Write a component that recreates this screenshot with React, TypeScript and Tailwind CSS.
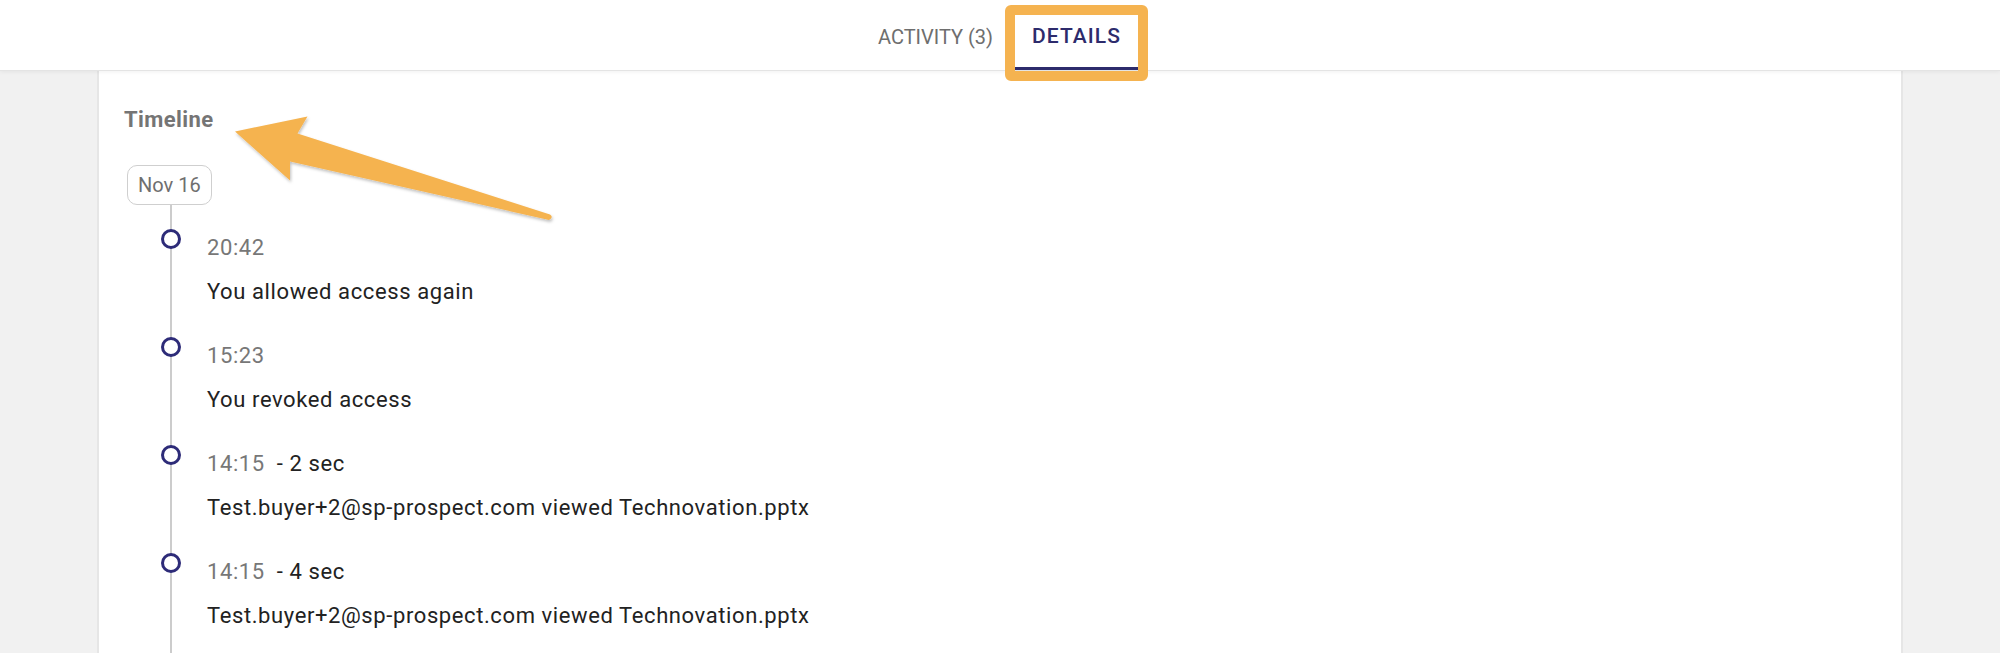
const events = [
  { time: "20:42", duration: "", text: "You allowed access again" },
  { time: "15:23", duration: "", text: "You revoked access" },
  { time: "14:15", duration: "- 2 sec", text: "Test.buyer+2@sp-prospect.com viewed Technovation.pptx" },
  { time: "14:15", duration: "- 4 sec", text: "Test.buyer+2@sp-prospect.com viewed Technovation.pptx" },
];

function Tabs() {
  return (
    <div className="relative z-10 flex h-[71px] shrink-0 justify-center border-b border-[#e4e4e4] bg-white shadow-[0_1px_4px_rgba(0,0,0,0.06)]">
      <div className="mr-[6px] flex h-full">
        <div className="flex h-full w-[159px] items-center justify-center pt-[4px] text-[20px] font-normal uppercase text-[#6e6e6e]">
          Activity (3)
        </div>
        <div className="relative flex h-full w-[123px] items-center justify-center pt-[4px] text-[21px] font-medium uppercase tracking-[0.05em] text-[#2d2b6c]">
          Details
          <div className="absolute bottom-0 left-0 right-0 h-[3px] bg-[#2d2b6c]" />
          {/* annotation box */}
          <div className="pointer-events-none absolute -left-[10px] -right-[10px] top-[5px] -bottom-[11px] rounded-[6px] border-[10px] border-[#f5b350]" />
        </div>
      </div>
    </div>
  );
}

function Arrow() {
  return (
    <svg
      className="pointer-events-none absolute left-0 top-0 z-20"
      width="600"
      height="260"
      viewBox="0 0 600 260"
    >
      <defs>
        <filter id="sh" x="-10%" y="-10%" width="120%" height="130%">
          <feDropShadow dx="1" dy="2" stdDeviation="1.5" floodColor="#000" floodOpacity="0.25" />
        </filter>
      </defs>
      <path
        d="M235 131.5 L307.5 116.5 L297.5 133.5 L550 214.5 Q554 217.5 549 220 L290 161.5 L290 180.5 Z"
        fill="#f5b350"
        filter="url(#sh)"
      />
    </svg>
  );
}

export default function App() {
  return (
    <div
      className="relative flex h-[653px] flex-col overflow-hidden bg-[#f1f1f1]"
      style={{ fontFamily: "Roboto, 'Liberation Sans', sans-serif" }}
    >
      <Tabs />
      <div className="mx-[97px] flex flex-1 flex-col items-start border-x-2 border-[#e6e6e6] bg-white px-[25px] pt-[36px]">
        <h3 className="text-[22px] font-bold leading-[26px] tracking-[0.4px] text-[#757575]">Timeline</h3>
        <div className="ml-[3px] mt-[32px] flex h-[40px] items-center rounded-[10px] border-[1.5px] border-[#cfcfcf] px-[10px] text-[20px] text-[#6f6f6f]">
          Nov 16
        </div>
        <div className="ml-[46px] flex-1 self-stretch border-l-2 border-[#cccccc] pt-[24px]">
          {events.map((e, i) => (
            <div key={i} className="mb-[32px] flex items-start">
              <div className="-ml-[11px] h-[20px] w-[20px] shrink-0 rounded-full border-[3px] border-[#2d2b78] bg-white" />
              <div className="ml-[26px] pt-[6px] text-[22px] leading-[26px] tracking-[0.6px]">
                <div>
                  <span className="text-[#777777]">{e.time}</span>
                  {e.duration && <span className="ml-[12px] text-[#222222]">{e.duration}</span>}
                </div>
                <div className="mt-[18px] text-[#222222]">{e.text}</div>
              </div>
            </div>
          ))}
        </div>
      </div>
      <Arrow />
    </div>
  );
}
